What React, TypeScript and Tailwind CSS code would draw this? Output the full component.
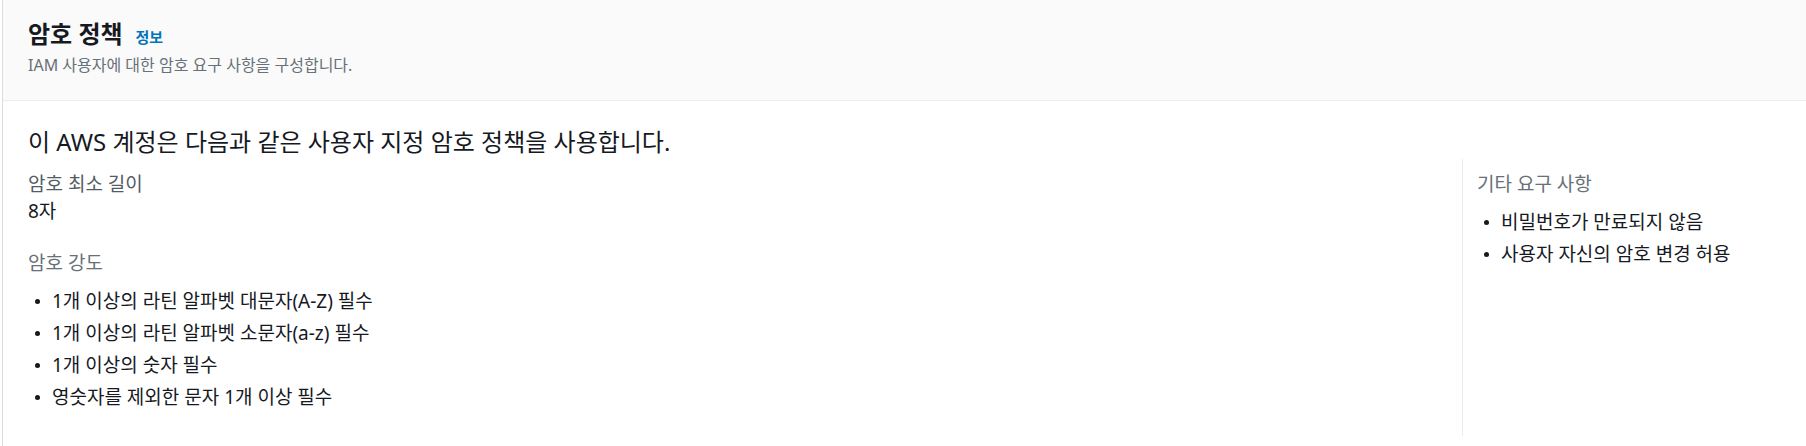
import React from "react";

const Dot = () => (
  <span className="ml-[7px] mr-[12px] inline-block h-[5px] w-[5px] shrink-0 rounded-full bg-[#16191f]" />
);

const Item = ({ children }: { children: React.ReactNode }) => (
  <li className="flex h-[24px] items-center leading-[24px]">
    <Dot />
    <span>{children}</span>
  </li>
);

export default function App() {
  return (
    <div className="h-[446px] w-[1806px] overflow-hidden bg-white pl-[2px] font-['Noto_Sans','Noto_Sans_CJK_KR',sans-serif] text-[#16191f]">
      <div className="h-full border-l border-[#dcdcdc]">
        <header className="h-[101px] border-b border-[#eaeded] bg-[#fafafa] px-[25px] pt-[20px]">
          <div className="flex items-baseline gap-[13px] leading-[28px]">
            <h2 className="text-[24px] font-bold text-[#16191f]">암호 정책</h2>
            <a className="text-[15px] font-bold text-[#0073bb]">정보</a>
          </div>
          <p className="mt-[4px] text-[16px] leading-[20px] text-[#687078]">
            IAM 사용자에 대한 암호 요구 사항을 구성합니다.
          </p>
        </header>
        <section className="pb-[9px] pl-[25px] pr-[26px] pt-[26px]">
          <h3 className="text-[24px] font-normal leading-[30px] text-[#16191f]">
            이 AWS 계정은 다음과 같은 사용자 지정 암호 정책을 사용합니다.
          </h3>
          <div className="mt-[2px] grid grid-cols-[1fr_318px]">
            <div className="pb-[27px] pt-[13px] text-[19px]">
              <div className="leading-[24px] text-[#545b64]">암호 최소 길이</div>
              <div className="mt-[3px] leading-[24px]">8자</div>
              <div className="mt-[28px] leading-[24px] text-[#687078]">암호 강도</div>
              <ul className="mt-[14px] flex flex-col gap-[8px]">
                <Item>1개 이상의 라틴 알파벳 대문자(A-Z) 필수</Item>
                <Item>1개 이상의 라틴 알파벳 소문자(a-z) 필수</Item>
                <Item>1개 이상의 숫자 필수</Item>
                <Item>영숫자를 제외한 문자 1개 이상 필수</Item>
              </ul>
            </div>
            <div className="border-l border-[#eaeded] pl-[14px] pt-[13px] text-[19px]">
              <div className="leading-[24px] text-[#687078]">기타 요구 사항</div>
              <ul className="mt-[14px] flex flex-col gap-[8px]">
                <Item>비밀번호가 만료되지 않음</Item>
                <Item>사용자 자신의 암호 변경 허용</Item>
              </ul>
            </div>
          </div>
        </section>
      </div>
    </div>
  );
}
